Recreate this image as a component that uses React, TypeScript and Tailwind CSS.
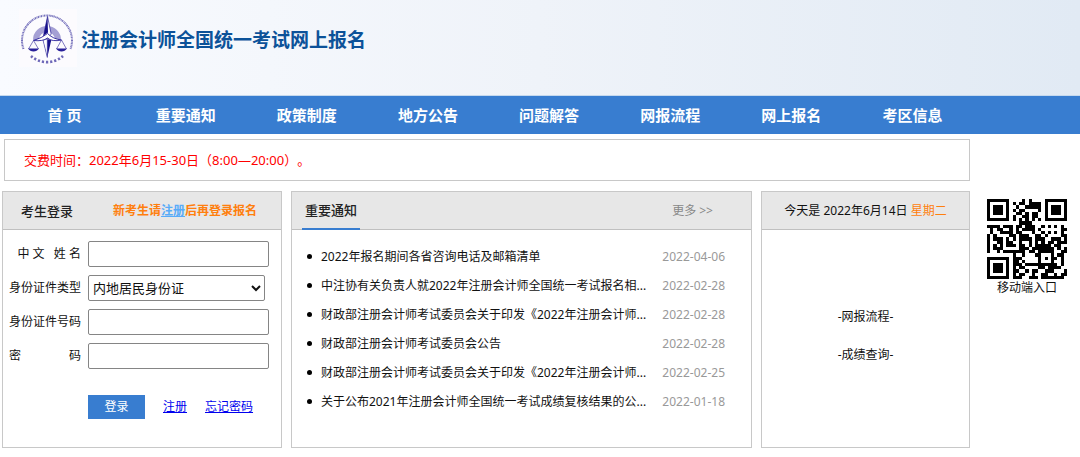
import React from "react";

const navItems = [
  "首 页",
  "重要通知",
  "政策制度",
  "地方公告",
  "问题解答",
  "网报流程",
  "网上报名",
  "考区信息",
];

const notices = [
  { title: "2022年报名期间各省咨询电话及邮箱清单", date: "2022-04-06" },
  { title: "中注协有关负责人就2022年注册会计师全国统一考试报名相...", date: "2022-02-28" },
  { title: "财政部注册会计师考试委员会关于印发《2022年注册会计师...", date: "2022-02-28" },
  { title: "财政部注册会计师考试委员会公告", date: "2022-02-28" },
  { title: "财政部注册会计师考试委员会关于印发《2022年注册会计师...", date: "2022-02-25" },
  { title: "关于公布2021年注册会计师全国统一考试成绩复核结果的公...", date: "2022-01-18" },
];

const qrRows = [
  "#######....#.#....#######",
  "#.....#.#.##.####.#.....#",
  "#.###.#..#..#####.#.###.#",
  "#.###.#.#.##....#.#.###.#",
  "#.###.#..##.#.##..#.###.#",
  "#.....#.#..##.##..#.....#",
  "#######.#.#.#.#.#.#######",
  "..........####...........",
  "####.###.##.###..#.#.#.#.",
  ".#.##..#.#.####.#......##",
  ".#..####.##...#..#.#.#.#.",
  "#.#....##.###..##.#....##",
  "#.###.#.#.####.###..###.#",
  "#..##.##..#..#.#.#.##.###",
  "#.#.#.###.##.#.#####.##..",
  "#.###.....###.#######.#.#",
  "#..#.#######.##.#####..##",
  "........#..#...##...#.##.",
  "#######.###.....#.#.##.#.",
  "#.....#.##.#....#...#..#.",
  "#.###.#.###.##########.#.",
  "#.###.#.#.##....##.####..",
  "#.###.#.##..#.##..###...#",
  "#.....#.#.##..#..##..#.##",
  "#######.###..###.#######.",
];

const Logo = () => (
  <svg className="h-[58px] w-[58px] shrink-0 bg-[#fcfbfe]" viewBox="0 0 58 58" fill="none">
    <path
      d="M4.5 40A25 25 0 1 1 51.5 40"
      stroke="#4a44a6"
      strokeWidth="2"
      strokeDasharray="1.3 .6 .8 .5"
      opacity=".75"
    />
    <path
      d="M12 47A24 24 0 0 0 44 47"
      stroke="#4a44a6"
      strokeWidth="2.6"
      strokeDasharray="2.2 1.9"
      opacity=".8"
    />
    <path d="M14 31a14 14 0 0 1 28 0h-6a8 8 0 0 0-16 0z" fill="#a5a0d4" />
    <path d="M28.5 7.500l3.700 17.500-3.700 5-4-3z" fill="#fff" stroke="#29209a" strokeWidth=".7" />
    <path d="M28.500 7.500l-4 19 4.500-3z" fill="#17108a" />
    <path d="M24 31l4.300 17.500L32.500 30z" fill="#17108a" />
    <path d="M24 31l4.300 17.500V30z" fill="#fff" stroke="#29209a" strokeWidth=".5" />
    <path d="M14.500 31.500Q23 29 28.500 24.500Q34 30 42.500 31Q33 33 28.500 29Q24 32.500 14.500 31.500z" fill="#fff" stroke="#29209a" strokeWidth=".9" />
    <path d="M14.500 31.500l-5 8.500M14.500 31.500l5 8.500M42.500 31l-5 9M42.500 31l5 9" stroke="#4a44a6" strokeWidth=".7" />
    <path d="M9 39.500h11q-2 3-5.500 3t-5.500-3zM37 39.500h11q-2 3-5.500 3t-5.500-3z" fill="#29209a" />
  </svg>
);

const QrCode = () => (
  <svg className="h-20 w-20" viewBox="0 0 25 25" shapeRendering="crispEdges" role="img">
    <path
      fill="#000"
      d={qrRows
        .map((row, y) =>
          row
            .split("")
            .map((cell, x) => (cell === "#" ? `M${x} ${y}h1v1h-1z` : ""))
            .join("")
        )
        .join("")}
    />
  </svg>
);

interface FieldProps {
  id: string;
  label: React.ReactNode;
  children: React.ReactNode;
}

const Field: React.FC<FieldProps> = ({ id, label, children }) => (
  <div className="flex items-center gap-[7px]">
    <label htmlFor={id} className="flex w-[72px] shrink-0 justify-between whitespace-pre">
      {label}
    </label>
    {children}
  </div>
);

const inputClass = "h-[26px] w-[181px] rounded-xs border border-[#858585] bg-white px-1 text-[13px]";
const panelClass = "h-[257px] border border-[#c8c8c8] bg-white";
const panelHeadClass = "flex h-[38px] items-center border-b border-[#c0c0c0] bg-[#e7e7e7]";

const LoginPanel = () => (
  <section className={`${panelClass} w-[280px] shrink-0`}>
    <div className={`${panelHeadClass} pl-[18px]`}>
      <h2 className="text-[13px] font-medium text-[#222]">考生登录</h2>
      <p className="ml-10 font-bold text-[#ff7f0e]">
        新考生请
        <a href="#register" className="text-[#58abf8] underline">注册</a>
        后再登录报名
      </p>
    </div>
    <form className="flex flex-col gap-2 pt-[11px] pl-[6px]">
      <Field id="name" label={<span className="ml-auto">中 文   姓 名</span>}>
        <input id="name" type="text" className={inputClass} />
      </Field>
      <Field id="idType" label="身份证件类型">
        <select
          id="idType"
          className="h-[26px] w-[177px] rounded-xs border border-[#858585] bg-white text-[13px]"
        >
          <option>内地居民身份证</option>
        </select>
      </Field>
      <Field id="idNumber" label="身份证件号码">
        <input id="idNumber" type="text" className={inputClass} />
      </Field>
      <Field id="password" label={<><span>密</span><span>码</span></>}>
        <input id="password" type="password" className={inputClass} />
      </Field>
      <div className="mt-[18px] flex items-center pl-[79px]">
        <button type="button" className="h-6 w-[57px] bg-[#387dd0] text-white">登录</button>
        <a href="#register" className="ml-[18px] text-[#0000ee] underline">注册</a>
        <a href="#forgot" className="ml-[18px] text-[#0000ee] underline">忘记密码</a>
      </div>
    </form>
  </section>
);

const NoticePanel = () => (
  <section className={`${panelClass} min-w-0 flex-1`}>
    <div className={`${panelHeadClass} justify-between pr-[38px] pl-[10px]`}>
      <h2 className="-mb-px flex h-[38px] items-center border-b-2 border-[#387dd0] px-[3px] text-[13px] font-medium text-[#222]">
        重要通知
      </h2>
      <a href="#more" className="text-[#888]">更多 &gt;&gt;</a>
    </div>
    <ul className="pt-3 pr-[26px] pl-[15px]">
      {notices.map((notice, i) => (
        <li key={i} className="flex h-[29px] items-center">
          <span className="mr-[9px] h-[5px] w-[5px] shrink-0 rounded-full bg-black"></span>
          <a href="#notice" className="whitespace-nowrap">{notice.title}</a>
          <span className="ml-auto text-[#999]">{notice.date}</span>
        </li>
      ))}
    </ul>
  </section>
);

const DatePanel = () => (
  <section className={`${panelClass} w-[209px] shrink-0`}>
    <div className={`${panelHeadClass} justify-center whitespace-pre`}>
      今天是 2022年6月14日 <span className="text-[#ff7f0e]">星期二</span>
    </div>
    <div className="flex flex-col items-center gap-5 pt-[78px]">
      <a href="#flow">-网报流程-</a>
      <a href="#score">-成绩查询-</a>
    </div>
  </section>
);

const App: React.FC = () => {
  return (
    <div className="bg-white font-['Noto_Sans','Noto_Sans_CJK_SC',sans-serif] text-[12px] leading-[18px] text-[#111] [text-spacing-trim:space-all]">
      <header className="flex h-24 items-start gap-1 border-b border-[#c5d9ee] bg-linear-to-r from-[#f9fbff] via-[#eff3f9] to-[#e1eaf4] pt-[9px] pl-[19px]">
        <Logo />
        <h1 className="text-[19px] leading-[62px] font-bold text-[#0c5299]">
          注册会计师全国统一考试网上报名
        </h1>
      </header>
      <nav className="bg-[#387dd0] pr-[107px] pl-1">
        <ul className="flex">
          {navItems.map((item) => (
            <li key={item} className="flex-1 text-center">
              <a href="#nav" className="text-[15px] leading-[38px] font-bold text-white">{item}</a>
            </li>
          ))}
        </ul>
      </nav>
      <div className="flex items-start pl-[2px]">
        <main className="min-w-0 flex-1 pt-[5px]">
          <p className="ml-[2px] h-[42px] border border-[#c8c8c8] pl-[19px] text-[13px] leading-10 text-[#ff0000]">
            交费时间：2022年6月15-30日（8:00—20:00）。
          </p>
          <div className="mt-[10px] flex gap-[9px]">
            <LoginPanel />
            <NoticePanel />
            <DatePanel />
          </div>
        </main>
        <aside className="flex w-[110px] shrink-0 flex-col items-center pt-[65px] pl-1">
          <QrCode />
          <p>移动端入口</p>
        </aside>
      </div>
    </div>
  );
};

export default App;
